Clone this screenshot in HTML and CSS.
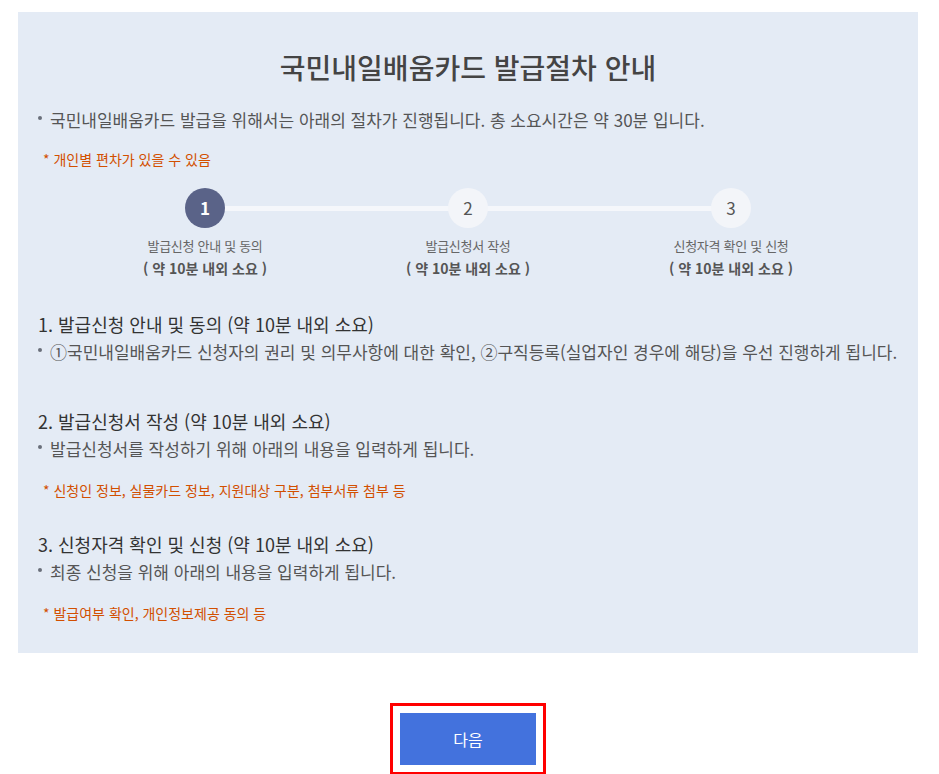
FILE: index.html
```html
<!DOCTYPE html>
<html lang="ko">
<head>
    <meta charset="UTF-8">
    <meta name="viewport" content="width=device-width, initial-scale=1.0">
    <title>국민내일배움카드 발급절차 안내</title>
    <link rel="stylesheet" href="styles.css">
</head>
<body>
    <div class="guide-box">
        <h2 class="guide-title">국민내일배움카드 발급절차 안내</h2>
        <p class="bullet">국민내일배움카드 발급을 위해서는 아래의 절차가 진행됩니다. 총 소요시간은 약 30분 입니다.</p>
        <p class="note intro-note">* 개인별 편차가 있을 수 있음</p>

        <!-- 진행 단계 -->
        <ol class="steps">
            <li class="step on">
                <span class="num">1</span>
                <span class="name">발급신청 안내 및 동의</span>
                <strong class="time">( 약 10분 내외 소요 )</strong>
            </li>
            <li class="step">
                <span class="num">2</span>
                <span class="name">발급신청서 작성</span>
                <strong class="time">( 약 10분 내외 소요 )</strong>
            </li>
            <li class="step">
                <span class="num">3</span>
                <span class="name">신청자격 확인 및 신청</span>
                <strong class="time">( 약 10분 내외 소요 )</strong>
            </li>
        </ol>

        <div class="section no-note">
            <h3>1. 발급신청 안내 및 동의 (약 10분 내외 소요)</h3>
            <p class="bullet">①국민내일배움카드 신청자의 권리 및 의무사항에 대한 확인, ②구직등록(실업자인 경우에 해당)을 우선 진행하게 됩니다.</p>
        </div>

        <div class="section">
            <h3>2. 발급신청서 작성 (약 10분 내외 소요)</h3>
            <p class="bullet">발급신청서를 작성하기 위해 아래의 내용을 입력하게 됩니다.</p>
            <p class="note">* 신청인 정보, 실물카드 정보, 지원대상 구분, 첨부서류 첨부 등</p>
        </div>

        <div class="section">
            <h3>3. 신청자격 확인 및 신청 (약 10분 내외 소요)</h3>
            <p class="bullet">최종 신청을 위해 아래의 내용을 입력하게 됩니다.</p>
            <p class="note">* 발급여부 확인, 개인정보제공 동의 등</p>
        </div>
    </div>

    <div class="btn-area">
        <div class="btn-focus">
            <button class="next-btn" type="button">다음</button>
        </div>
    </div>
</body>
</html>
```

FILE: styles.css
```css
/* 기본 리셋 */
* {
    box-sizing: border-box;
    margin: 0;
    padding: 0;
    font-family: "Noto Sans CJK KR", "Noto Sans", sans-serif;
}
body {
    background-color: #fff;
    padding: 12px 21px 0 18px;
    color: #555;
}
ol {
    list-style: none;
}

/* 안내 박스 */
.guide-box {
    background-color: #e4ebf5;
    padding: 35px 20px 30px;
}
.guide-title {
    font-size: 28px;
    font-weight: 500;
    line-height: 40px;
    color: #444;
    text-align: center;
    margin-bottom: 21px;
}
.bullet {
    position: relative;
    padding-left: 12px;
    font-size: 17px;
    line-height: 24px;
    color: #555;
}
.bullet::before {
    content: "";
    position: absolute;
    left: 0;
    top: 8px;
    width: 4px;
    height: 4px;
    border-radius: 50%;
    background-color: #6a6f7a;
}
.note {
    margin-top: 19px;
    padding-left: 5px;
    font-size: 14px;
    line-height: 20px;
    color: #d24f00;
}
.intro-note {
    margin-top: 17px;
}

/* 단계 표시 */
.steps {
    position: relative;
    display: flex;
    justify-content: center;
    margin-top: 19px;
}
.steps::before {
    content: "";
    position: absolute;
    left: 50%;
    top: 18px;
    width: 526px;
    margin-left: -263px;
    height: 5px;
    background-color: #f5f7fb;
}
.step {
    position: relative;
    width: 263px;
    display: flex;
    flex-direction: column;
    align-items: center;
    text-align: center;
}
.step .num {
    width: 40px;
    height: 40px;
    border-radius: 50%;
    background-color: #f3f5f9;
    color: #555;
    font-size: 17px;
    line-height: 40px;
    margin-bottom: 6px;
}
.step.on .num {
    background-color: #5a6388;
    color: #fff;
    font-weight: bold;
}
.step .name {
    font-size: 13px;
    line-height: 23px;
    letter-spacing: -0.3px;
    color: #666;
}
.step .time {
    font-size: 14px;
    line-height: 23px;
    color: #555;
}

/* 단계별 설명 */
.section {
    margin-top: 30px;
}
.section.no-note {
    padding-bottom: 13px;
}
.section h3 {
    font-size: 18px;
    font-weight: 400;
    line-height: 28px;
    color: #333;
    margin-bottom: 2px;
}

/* 하단 버튼 */
.btn-area {
    display: flex;
    justify-content: center;
    padding: 50px 0 0 0;
}
.btn-focus {
    border: 3px solid #f00;
    padding: 7px;
}
.next-btn {
    display: block;
    width: 136px;
    height: 52px;
    border: none;
    background-color: #4372dd;
    color: #fff;
    font-size: 16px;
    cursor: pointer;
}
```
